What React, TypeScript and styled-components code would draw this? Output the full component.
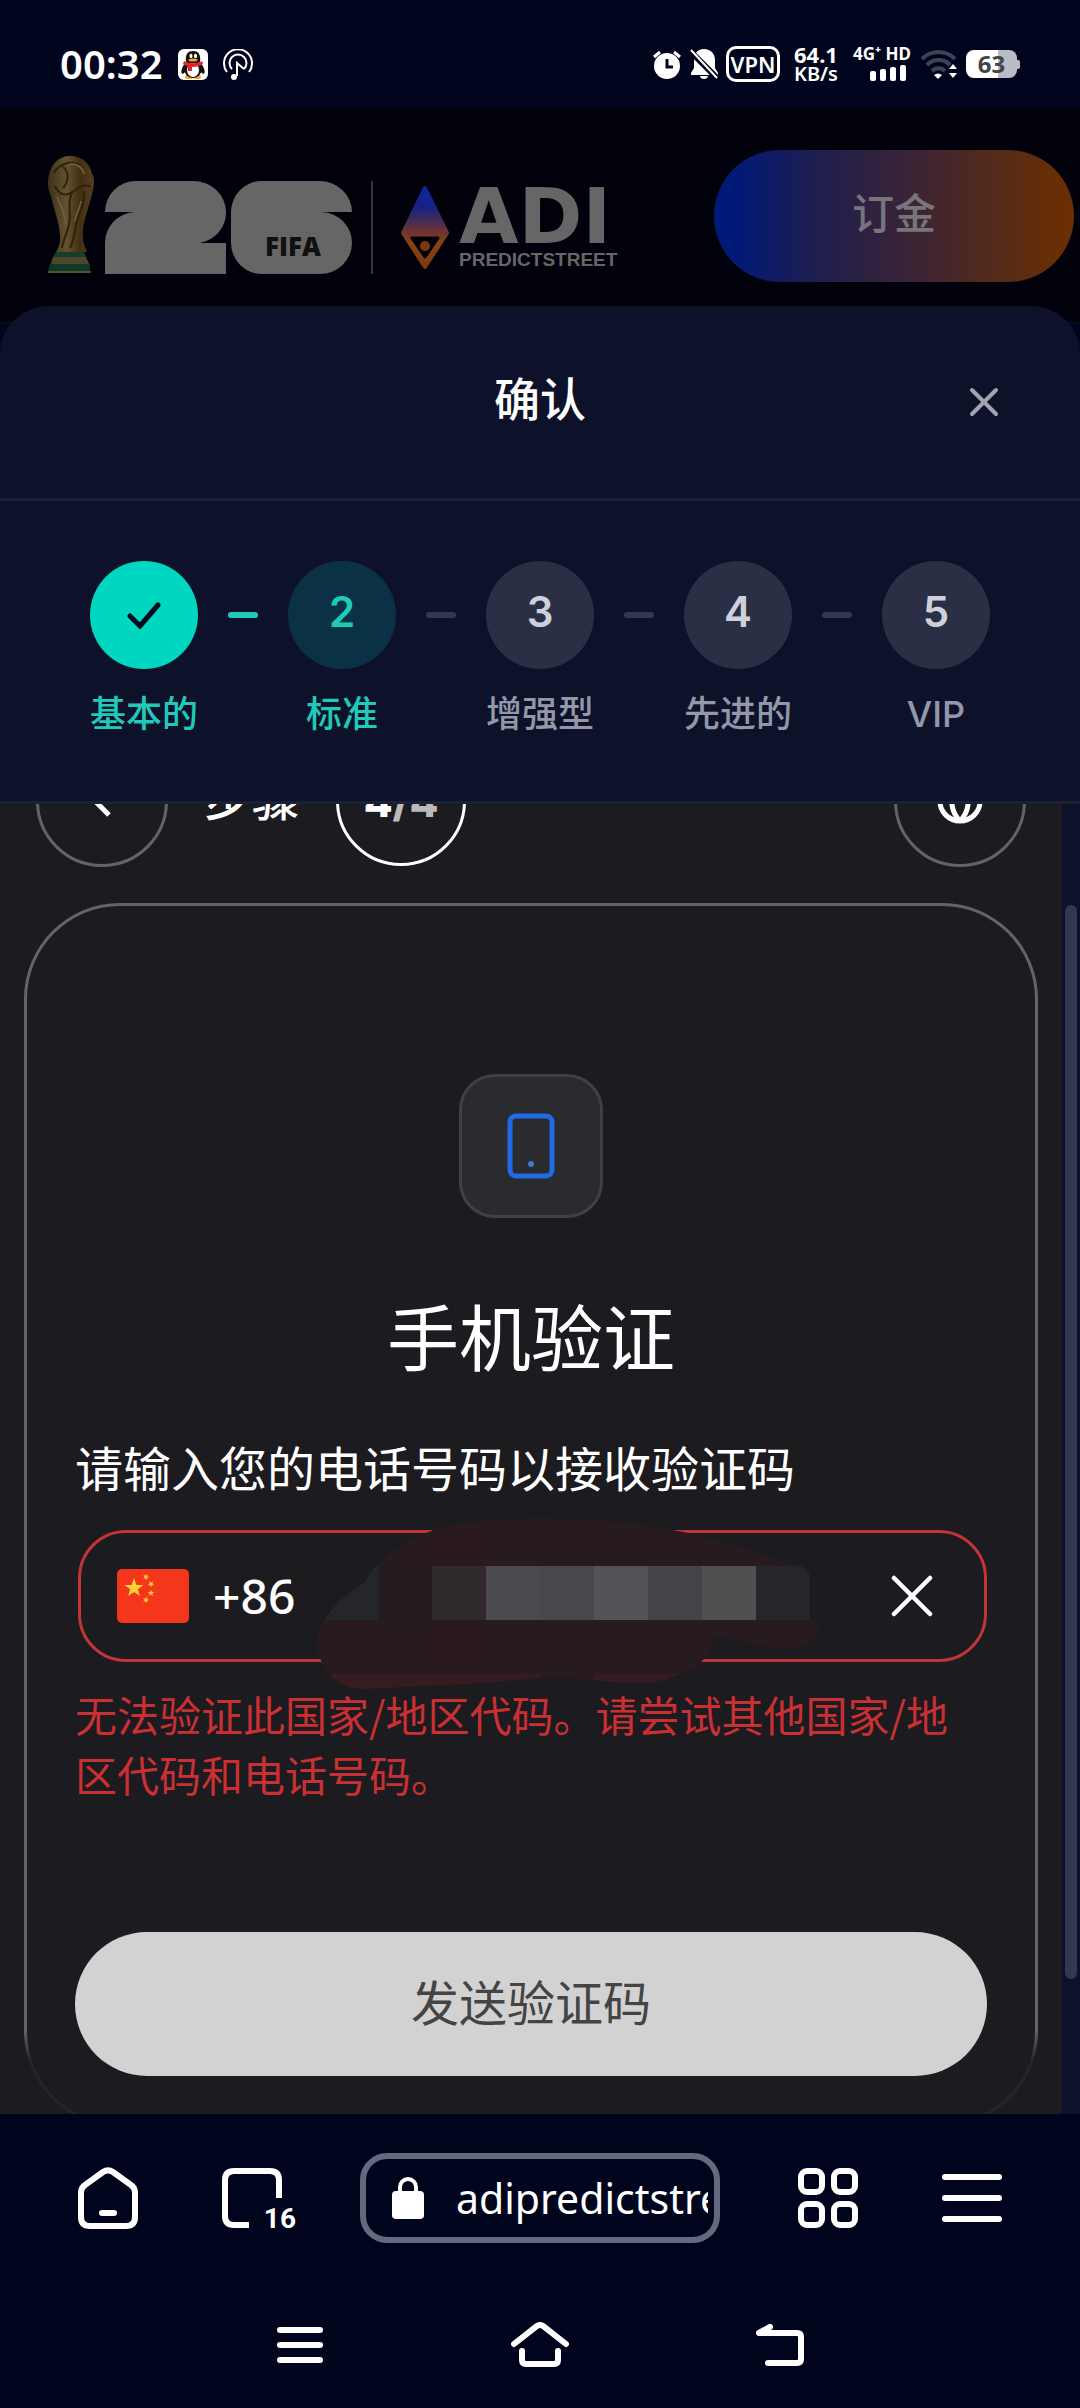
import { useState } from "react";
import styled, { createGlobalStyle, css } from "styled-components";

const GlobalStyle = createGlobalStyle`
  *, *::before, *::after {
    box-sizing: border-box;
  }

  body {
    margin: 0;
    background: #00051d;
    color: #fff;
    font-family: "Noto Sans CJK SC", "Noto Sans", sans-serif;
  }

  button, input {
    font: inherit;
    color: inherit;
    border: none;
    background: none;
    padding: 0;
    margin: 0;
  }

  button {
    cursor: pointer;
  }

  svg {
    display: block;
    flex: none;
  }
`;

const Screen = styled.div`
  display: flex;
  flex-direction: column;
  height: 100vh;
  overflow: hidden;
`;

/* status bar */

const StatusBar = styled.div`
  display: flex;
  justify-content: space-between;
  flex: none;
  height: 108px;
  padding: 20px 60px 0 60px;
  font-family: "Noto Sans", sans-serif;
`;

const StatusGroup = styled.div<{ $gap: number }>`
  display: flex;
  align-items: center;
  gap: ${({ $gap }) => $gap}px;
`;

const Clock = styled.span`
  font-size: 40px;
  font-weight: 600;
  line-height: 48px;
`;

const VpnBadge = styled.span`
  width: 54px;
  height: 36px;
  margin-right: 6px;
  border: 3px solid #fff;
  border-radius: 10px;
  font-size: 22px;
  font-weight: 600;
  line-height: 31px;
  text-align: center;
`;

const NetSpeed = styled.span`
  display: flex;
  flex-direction: column;
  width: 48px;
  margin-right: 2px;
  font-size: 22px;
  font-weight: 700;
  line-height: 20px;

  small {
    font-size: 20px;
    font-weight: 600;
  }
`;

const Signal = styled.span`
  display: flex;
  flex-direction: column;
  align-items: center;
  gap: 4px;
  width: 60px;
  font-size: 17px;
  font-weight: 700;
  line-height: 14px;
  white-space: nowrap;
`;

const Bars = styled.span`
  display: flex;
  align-items: flex-end;
  gap: 4px;
  height: 16px;
  margin-left: 12px;
`;

const Bar = styled.i<{ $height: number }>`
  width: 6px;
  height: ${({ $height }) => $height}px;
  border-radius: 2px;
  background: #fff;
`;

const Battery = styled.span`
  display: flex;
  align-items: center;

  &::after {
    content: "";
    width: 3px;
    height: 9px;
    border-radius: 0 2px 2px 0;
    background: #b9bbc6;
  }
`;

const BatteryBody = styled.span`
  width: 51px;
  height: 28px;
  border-radius: 8px;
  background: linear-gradient(90deg, #fff 63%, #b9bbc6 63%);
  color: #444;
  font-size: 24px;
  font-weight: 700;
  line-height: 28px;
  text-align: center;
`;

/* site header, dimmed behind the sheet */

const SiteHeader = styled.header`
  display: flex;
  justify-content: space-between;
  align-items: flex-start;
  flex: none;
  height: 216px;
  padding: 42px 6px 0 48px;
  border-bottom: 3px solid #080b14;
  background: #00010a;
`;

const Logo = styled.svg`
  margin-top: 5px;
`;

const DepositButton = styled.button`
  width: 360px;
  height: 132px;
  padding-bottom: 12px;
  border-radius: 66px;
  background: linear-gradient(90deg, #001a78 6%, #1c1d52 26%, #35233a 50%, #4d2922 72%, #6a2e02 97%);
  color: #77747c;
  font-size: 42px;
  font-weight: 500;
`;

/* verification sheet */

const Sheet = styled.section`
  position: relative;
  display: flex;
  flex-direction: column;
  flex: 1;
  min-height: 0;
  margin-top: -18px;
  border-radius: 48px 48px 0 0;
  background: #0d122a;
  overflow: hidden;
`;

const SheetHeader = styled.div`
  display: grid;
  grid-template-columns: 1fr auto 1fr;
  align-items: center;
  flex: none;
  height: 195px;
  padding: 0 72px;
  border-bottom: 3px solid #191e37;
`;

const SheetTitle = styled.h1`
  grid-column: 2;
  margin: 0 0 12px;
  font-size: 46px;
  font-weight: 500;
  line-height: 60px;
`;

const IconButton = styled.button`
  justify-self: end;
  display: grid;
  place-items: center;
  width: 48px;
  height: 48px;
`;

const Stepper = styled.ol`
  display: flex;
  justify-content: center;
  flex: none;
  height: 303px;
  margin: 0;
  padding: 60px 0 0;
  border-bottom: 3px solid #1a2035;
  list-style: none;
`;

type StepState = "done" | "current" | "todo";

const Step = styled.li`
  display: flex;
`;

const StepBody = styled.div<{ $state: StepState }>`
  display: flex;
  flex-direction: column;
  align-items: center;
  gap: 18px;
  width: 108px;
  color: ${({ $state }) => ($state === "todo" ? "#9497a8" : "#1fcab8")};
  font-family: Inter, "Noto Sans CJK SC", sans-serif;
  font-size: 36px;
  font-weight: 500;
  line-height: 54px;
  white-space: nowrap;
`;

const StepCircle = styled.span<{ $state: StepState }>`
  display: grid;
  place-items: center;
  width: 108px;
  height: 108px;
  border-radius: 50%;
  font-size: 42px;
  font-weight: 600;
  line-height: 48px;

  ${({ $state }) =>
    $state === "done"
      ? css`
          background: #00d7c0;
        `
      : $state === "current"
        ? css`
            padding-bottom: 6px;
            background: #0b3244;
          `
        : css`
            padding-bottom: 6px;
            background: #2a2f45;
            color: #cfd1da;
          `}
`;

const Dash = styled.i<{ $active: boolean }>`
  width: 30px;
  height: 6px;
  margin: 51px 30px 0;
  border-radius: 3px;
  background: ${({ $active }) => ($active ? "#1fcab8" : "#333852")};
`;

/* embedded verification page */

const Frame = styled.div`
  display: flex;
  flex: 1;
  min-height: 0;
`;

const FramePage = styled.main`
  flex: 1;
  min-width: 0;
  overflow: hidden;
  background: #1c1b1f;
`;

const ScrollTrack = styled.div`
  flex: none;
  width: 18px;
  padding: 0 3px;
`;

const ScrollThumb = styled.div`
  height: 82%;
  margin-top: 101px;
  border-radius: 6px;
  background: #33384f;
`;

/* already scrolled half way under the stepper */
const PageBar = styled.div`
  display: flex;
  align-items: center;
  gap: 36px;
  height: 132px;
  margin: -69px 36px 36px;
`;

const RoundButton = styled.button`
  display: grid;
  place-items: center;
  width: 132px;
  height: 132px;
  border: 3px solid #646466;
  border-radius: 50%;

  &:last-child {
    margin-left: auto;
  }
`;

const StepWord = styled.span`
  padding-bottom: 12px;
  font-size: 48px;
  font-weight: 500;
  line-height: 60px;
`;

const StepCount = styled.span`
  display: grid;
  place-items: center;
  width: 130px;
  height: 130px;
  border: 3px solid #fff;
  border-radius: 50%;
  font-family: Inter, sans-serif;
  font-size: 42px;
  font-weight: 800;

  em {
    color: #bcbabb;
    font-style: normal;
  }
`;

/* the outline fades out where the bottom corners begin */
const Card = styled.form`
  display: flex;
  flex-direction: column;
  margin: 0 24px;
  padding: 168px 48px 48px;
  border: 3px solid transparent;
  border-radius: 96px;
  background:
    linear-gradient(#1c1b1f, #1c1b1f) padding-box,
    linear-gradient(#646466 calc(100% - 96px), #252528 calc(100% - 66px)) border-box;
`;

const PhoneTile = styled.div`
  display: grid;
  place-items: center;
  align-self: center;
  width: 144px;
  height: 144px;
  border: 3px solid #404145;
  border-radius: 36px;
  background: #2a2b2f;
`;

const CardTitle = styled.h2`
  margin: 68px 0 54px;
  font-size: 72px;
  font-weight: 400;
  line-height: 96px;
  text-align: center;
`;

const FieldLabel = styled.label`
  font-size: 48px;
  line-height: 60px;
`;

const PhoneField = styled.div`
  position: relative;
  display: flex;
  align-items: center;
  height: 132px;
  margin: 34px 0 22px 3px;
  padding: 0 48px 0 36px;
  border: 3px solid #c23438;
  border-radius: 48px;
`;

const CountryButton = styled.button`
  display: flex;
  align-items: center;
  gap: 24px;
  font-family: "Noto Sans", sans-serif;
  font-size: 48px;
  font-weight: 500;
  line-height: 60px;
`;

const PhoneInput = styled.input`
  flex: 1;
  min-width: 0;
  height: 60px;
  margin-left: 24px;
  font-size: 48px;
  outline: none;
`;

const Smudge = styled.svg`
  position: absolute;
  left: 234px;
  top: -17px;
  pointer-events: none;
`;

const ErrorText = styled.p`
  margin: 0 0 128px;
  color: #c83033;
  font-size: 42px;
  line-height: 60px;
`;

const SendButton = styled.button`
  height: 144px;
  padding-bottom: 8px;
  border-radius: 72px;
  background: #d2d2d2;
  color: #444;
  font-size: 48px;
  line-height: 60px;
`;

/* browser toolbar and system navigation */

const BrowserBar = styled.nav`
  display: grid;
  grid-template-columns: 144px 144px minmax(0, 1fr) 144px 144px;
  align-items: center;
  flex: none;
  height: 168px;
  padding: 0 36px;
`;

const BarButton = styled.button`
  display: grid;
  place-items: center;
  height: 96px;
`;

const TabsIcon = styled.span`
  position: relative;
`;

const TabCount = styled.span`
  position: absolute;
  right: -14px;
  bottom: -4px;
  font-family: Roboto, sans-serif;
  font-size: 28px;
  font-weight: 700;
  line-height: 26px;
`;

const AddressBox = styled.label`
  display: flex;
  align-items: center;
  gap: 32px;
  height: 90px;
  margin: 0 36px;
  padding: 0 6px 0 26px;
  border: 6px solid #646a7e;
  border-radius: 27px;
`;

const AddressInput = styled.input`
  flex: 1;
  min-width: 0;
  height: 60px;
  font-family: "Noto Sans", sans-serif;
  font-size: 41px;
  outline: none;
`;

const SystemNav = styled.nav`
  display: flex;
  justify-content: center;
  flex: none;
  height: 126px;
`;

const SystemButton = styled.button`
  display: grid;
  place-items: center;
  width: 240px;
`;

const steps: { label: string; state: StepState }[] = [
  { label: "基本的", state: "done" },
  { label: "标准", state: "current" },
  { label: "增强型", state: "todo" },
  { label: "先进的", state: "todo" },
  { label: "VIP", state: "todo" },
];

const smudgeCells = ["#231b20", "#30292e", "#4a4a4f", "#47474d", "#525258", "#434348", "#505051", "#25252b"];

const star = "M0-10 2.4-3.1 9.5-3.1 3.8 1.2 5.9 8.1 0 4-5.9 8.1-3.8 1.2-9.5-3.1-2.4-3.1z";

function QQIcon() {
  return (
    <svg width="30" height="31" viewBox="0 0 30 31">
      <rect width="30" height="31" rx="6" fill="#fff" />
      <ellipse cx="6" cy="20" rx="2" ry="5" fill="#111" transform="rotate(20 6 20)" />
      <ellipse cx="24" cy="20" rx="2" ry="5" fill="#111" transform="rotate(-20 24 20)" />
      <ellipse cx="11" cy="28" rx="4" ry="2" fill="#f5a623" />
      <ellipse cx="19" cy="28" rx="4" ry="2" fill="#f5a623" />
      <ellipse cx="15" cy="20" rx="9" ry="9" fill="#111" />
      <ellipse cx="15" cy="21" rx="6" ry="7" fill="#fff" />
      <path d="M8 13C7 5 10 2 15 2s8 3 7 11z" fill="#111" />
      <ellipse cx="13" cy="7" rx="1.5" ry="2.3" fill="#fff" />
      <ellipse cx="17.5" cy="7" rx="1.5" ry="2.3" fill="#fff" />
      <ellipse cx="15" cy="11" rx="4.5" ry="1.5" fill="#f5a623" />
      <path d="M6 12c5 3 13 3 18 0l1 3c-3 2-7 3-11 3v4h-4v-5c-2 0-4-1-5-2z" fill="#e2232e" />
    </svg>
  );
}

function StatusIcons() {
  return (
    <>
      <svg width="30" height="30" viewBox="0 0 30 30">
        <path d="M2 8 8 3M28 8l-6-5" stroke="#fff" strokeWidth="3" />
        <circle cx="15" cy="17" r="13" fill="#fff" />
        <path d="M15 10v8h6" fill="none" stroke="#00051d" strokeWidth="3" />
      </svg>
      <svg width="28" height="30" viewBox="0 0 28 30">
        <path d="M14 0c7 0 11 5 11 11v8l3 5v2H1v-2l3-5v-8C4 5 7 0 14 0zM10 27h8c0 2-2 3-4 3s-4-1-4-3z" fill="#fff" />
        <path d="M-1 1 28 30" stroke="#00051d" strokeWidth="6" />
        <path d="M1 1 27 29" stroke="#fff" strokeWidth="2" />
      </svg>
    </>
  );
}

function SiteLogo() {
  return (
    <Logo width="576" height="120" viewBox="0 0 576 120" role="img" aria-label="FIFA 26 | ADI Predictstreet">
      <defs>
        <linearGradient id="gold" x1="0" x2="1">
          <stop offset="0" stopColor="#3d3019" />
          <stop offset=".4" stopColor="#63522f" />
          <stop offset=".7" stopColor="#432f12" />
          <stop offset="1" stopColor="#544020" />
        </linearGradient>
        <linearGradient id="gem" x1="0" y1="0" x2="0" y2="1">
          <stop offset="0" stopColor="#10249a" />
          <stop offset=".25" stopColor="#172283" />
          <stop offset=".55" stopColor="#6b3431" />
          <stop offset=".7" stopColor="#8a420f" />
          <stop offset="1" stopColor="#7a3a0c" />
        </linearGradient>
      </defs>
      <path
        d="M22 1C35 1 42 9 44 19c3 3 2 10 1 16-2 9-4 14-6 22-3 10-5 18-4 25 0 7 3 11 4 15H8c2-4 5-8 4-17C11 66 5 52 3 41 0 36-1 26 1 20 3 9 11 1 22 1z"
        fill="url(#gold)"
      />
      <path
        d="M6 18c5-9 18-14 27-7M7 31c4 9 11 11 19 5 6-5 12-7 17-4M24 37c-6 14 1 22-4 36-2 8-5 13-6 20M36 36c2 12-6 22-8 34-2 10-2 15-6 23M15 12c6 4 6 14 0 21"
        fill="none"
        stroke="#32210b"
        strokeWidth="2"
      />
      <path d="M20 10c8-3 14 2 16 9M9 42c4 8 8 18 9 28M33 46c-1 8-5 12-6 20" fill="none" stroke="#75623d" strokeWidth="1.5" />
      <path d="M8 97h28l2 5H5z" fill="#12402c" />
      <path d="M5 102h33l4 9H2z" fill="#4f472b" />
      <path d="M2 109h40v8H0z" fill="#0c3a26" />
      <path d="M0 117h43" stroke="#5b4c2c" strokeWidth="2" />
      <g fill="#666">
        <path d="M57 57a31 31 0 0 1 31-31h57a33 31 0 0 1 33 31 33 31 0 0 1-26 31h26v31H57V88a31 31 0 0 1 29-31z" />
        <path d="M214 26h57a33 31 0 0 1 33 31h-30a31 31 0 0 1 30 31 32 31 0 0 1-32 31h-58a31 31 0 0 1-31-31V57a31 31 0 0 1 31-31z" />
        <path d="M324 26v93" stroke="#666" strokeWidth="1" />
      </g>
      <text x="217" y="101" fill="#101010" fontFamily="Open Sans, sans-serif" fontSize="26" fontWeight="800">
        FIFA
      </text>
      <path
        d="M377 33 355 78 377 112 399 78z"
        fill="url(#gem)"
        stroke="url(#gem)"
        strokeWidth="4"
        strokeLinejoin="round"
      />
      <path d="M364 83h26l-13 19z" fill="#00010a" stroke="#00010a" strokeWidth="3" strokeLinejoin="round" />
      <circle cx="377" cy="91" r="5" fill="#7a3a0c" />
      <text x="411" y="88" fill="#666" fontFamily="DejaVu Sans, sans-serif" fontSize="77" fontWeight="700">
        ADI
      </text>
      <text x="411" y="111" fill="#666" fontFamily="Liberation Sans, sans-serif" fontSize="19" fontWeight="700">
        PREDICTSTREET
      </text>
    </Logo>
  );
}

function PhoneSmudge() {
  return (
    <Smudge width="510" height="176" viewBox="315 1516 510 176" aria-hidden="true">
      <defs>
        <clipPath id="smudge">
          <path d="M317 1642C317 1634 320 1626 324 1621 332 1608 342 1596 365 1582 370 1572 374 1567 382 1561 398 1547 416 1536 434 1530 470 1520 505 1518 540 1518 590 1518 640 1524 673 1530 715 1538 752 1551 781 1561 800 1564 810 1568 810 1578V1621L820 1624C819 1634 814 1641 809 1643 799 1650 790 1650 781 1649 757 1646 732 1640 714 1635 714 1648 709 1655 702 1661 695 1670 688 1672 678 1675 664 1681 652 1683 636 1683 610 1683 570 1676 540 1678 520 1679 500 1682 482 1683L365 1689C350 1689 341 1684 334 1679 325 1670 317 1658 317 1642z" />
        </clipPath>
      </defs>
      <g clipPath="url(#smudge)">
        <path d="M315 1516h510v176H315z" fill="#271b20" />
        <path d="M432 1516h54v50h-54zM432 1620h54v54h-54z" fill="#2a1a1f" />
        <path d="M315 1566h63v54h-63z" fill="#25262b" />
        <path d="M315 1674h225v18H315zM594 1674h108v18H594z" fill="#361b20" />
        {smudgeCells.map((fill, i) => (
          <rect key={i} x={378 + i * 54} y="1566" width="54" height="54" fill={fill} />
        ))}
      </g>
    </Smudge>
  );
}

export default function App() {
  const [phone, setPhone] = useState("");

  return (
    <Screen>
      <GlobalStyle />
      <StatusBar>
        <StatusGroup $gap={15}>
          <Clock>00:32</Clock>
          <QQIcon />
          <svg width="30" height="31" viewBox="0 0 30 31" fill="none" stroke="#fff" strokeWidth="2">
            <path d="M4 23a14 14 0 1 1 22 0" />
            <path d="M9 20a8.500 8.500 0 1 1 12 0" />
            <path d="M14 27V14l7 6" />
            <circle cx="11" cy="28" r="3" fill="#fff" stroke="none" />
          </svg>
        </StatusGroup>
        <StatusGroup $gap={8}>
          <StatusIcons />
          <VpnBadge>VPN</VpnBadge>
          <NetSpeed>
            64.1
            <small>KB/s</small>
          </NetSpeed>
          <Signal>
            4G⁺ HD
            <Bars>
              {[10, 12, 14, 16].map((height) => (
                <Bar key={height} $height={height} />
              ))}
            </Bars>
          </Signal>
          <svg width="38" height="30" viewBox="0 0 38 30" fill="none">
            <path d="M2 10a23 23 0 0 1 33 0M7 16a16 16 0 0 1 23 0M12 22a9 9 0 0 1 13 0" stroke="#3e4256" strokeWidth="4" />
            <path d="M14 26q4-3 8 0l-4 4z" fill="#fff" />
            <path d="m33 15 4 5h-8zM33 29l4-5h-8z" fill="#fff" />
          </svg>
          <Battery>
            <BatteryBody>63</BatteryBody>
          </Battery>
        </StatusGroup>
      </StatusBar>

      <SiteHeader>
        <SiteLogo />
        <DepositButton>订金</DepositButton>
      </SiteHeader>

      <Sheet>
        <SheetHeader>
          <SheetTitle>确认</SheetTitle>
          <IconButton aria-label="关闭">
            <svg width="30" height="30" viewBox="0 0 30 30" stroke="#a2a4b1" strokeWidth="4" strokeLinecap="round">
              <path d="m3 3 24 24M27 3 3 27" />
            </svg>
          </IconButton>
        </SheetHeader>

        <Stepper>
          {steps.map(({ label, state }, i) => (
            <Step key={label}>
              {i > 0 && <Dash $active={i === 1} />}
              <StepBody $state={state}>
                <StepCircle $state={state}>
                  {state === "done" ? (
                    <svg width="36" height="28" viewBox="0 0 36 28" fill="none" stroke="#050a20" strokeWidth="5" strokeLinecap="round">
                      <path d="m4 15 10 10L32 4" />
                    </svg>
                  ) : (
                    i + 1
                  )}
                </StepCircle>
                {label}
              </StepBody>
            </Step>
          ))}
        </Stepper>

        <Frame>
          <FramePage>
            <PageBar>
              <RoundButton aria-label="返回">
                <svg width="48" height="48" viewBox="0 0 48 48" fill="none" stroke="#fff" strokeWidth="5">
                  <path d="M31 10 17 24l14 14" />
                </svg>
              </RoundButton>
              <StepWord>步骤</StepWord>
              <StepCount>
                <span>
                  4<em>/4</em>
                </span>
              </StepCount>
              <RoundButton aria-label="语言">
                <svg width="46" height="46" viewBox="0 0 46 46" fill="none" stroke="#fff" strokeWidth="5">
                  <circle cx="23" cy="23" r="20" />
                  <path d="M3 23h40M23 3c-11 11-11 29 0 40M23 3c11 11 11 29 0 40" />
                </svg>
              </RoundButton>
            </PageBar>

            <Card onSubmit={(e) => e.preventDefault()}>
              <PhoneTile>
                <svg width="48" height="66" viewBox="0 0 48 66">
                  <rect x="3" y="3" width="42" height="60" rx="6" fill="none" stroke="#1f6ae6" strokeWidth="5" />
                  <circle cx="24" cy="51" r="3" fill="#3f78c9" />
                </svg>
              </PhoneTile>
              <CardTitle>手机验证</CardTitle>
              <FieldLabel htmlFor="phone">请输入您的电话号码以接收验证码</FieldLabel>
              <PhoneField>
                <CountryButton type="button">
                  <svg width="72" height="54" viewBox="0 0 72 54">
                    <rect width="72" height="54" rx="5" fill="#f4361c" />
                    <g fill="#ffd234">
                      <path d={star} transform="translate(17 19)" />
                      <path d={star} transform="translate(29 8) rotate(20) scale(.35)" />
                      <path d={star} transform="translate(34 15) rotate(40) scale(.35)" />
                      <path d={star} transform="translate(34 24) scale(.35)" />
                      <path d={star} transform="translate(29 31) rotate(20) scale(.35)" />
                    </g>
                  </svg>
                  +86
                </CountryButton>
                <PhoneInput id="phone" type="tel" value={phone} onChange={(e) => setPhone(e.target.value)} />
                <IconButton type="button" aria-label="清除" onClick={() => setPhone("")}>
                  <svg width="42" height="42" viewBox="0 0 42 42" stroke="#fff" strokeWidth="4.5" strokeLinecap="round">
                    <path d="m3 3 36 36M39 3 3 39" />
                  </svg>
                </IconButton>
                <PhoneSmudge />
              </PhoneField>
              <ErrorText>无法验证此国家/地区代码。请尝试其他国家/地区代码和电话号码。</ErrorText>
              <SendButton>发送验证码</SendButton>
            </Card>
          </FramePage>
          <ScrollTrack>
            <ScrollThumb />
          </ScrollTrack>
        </Frame>
      </Sheet>

      <BrowserBar>
        <BarButton aria-label="主页">
          <svg width="60" height="62" viewBox="0 0 60 62" fill="none" stroke="#fff" strokeWidth="6" strokeLinecap="round">
            <path d="M3 26c0-4 1-6 4-8L25 5c3-2 7-2 10 0l18 13c3 2 4 4 4 8v24c0 6-3 9-9 9H12c-6 0-9-3-9-9z" />
            <path d="M24 46h12" />
          </svg>
        </BarButton>
        <BarButton aria-label="标签页">
          <TabsIcon>
            <svg width="60" height="60" viewBox="0 0 60 60" fill="none" stroke="#fff" strokeWidth="6">
              <path d="M27 57H12c-6 0-9-3-9-9V12c0-6 3-9 9-9h36c6 0 9 3 9 9v18" />
            </svg>
            <TabCount>16</TabCount>
          </TabsIcon>
        </BarButton>
        <AddressBox>
          <svg width="32" height="42" viewBox="0 0 32 42">
            <path d="M8 16v-6a8 8 0 0 1 16 0v6" fill="none" stroke="#fff" strokeWidth="4" />
            <rect y="14" width="32" height="28" rx="4" fill="#fff" />
          </svg>
          <AddressInput aria-label="网址" readOnly value="adipredictstreet" />
        </AddressBox>
        <BarButton aria-label="应用">
          <svg width="60" height="60" viewBox="0 0 60 60" fill="none" stroke="#fff" strokeWidth="6">
            <rect x="3" y="3" width="21" height="21" rx="6" />
            <rect x="36" y="3" width="21" height="21" rx="6" />
            <rect x="3" y="36" width="21" height="21" rx="6" />
            <rect x="36" y="36" width="21" height="21" rx="6" />
          </svg>
        </BarButton>
        <BarButton aria-label="菜单">
          <svg width="60" height="48" viewBox="0 0 60 48" stroke="#fff" strokeWidth="6" strokeLinecap="round">
            <path d="M3 3h54M3 24h54M3 45h54" />
          </svg>
        </BarButton>
      </BrowserBar>

      <SystemNav>
        <SystemButton aria-label="最近任务">
          <svg width="46" height="36" viewBox="0 0 46 36" stroke="#fff" strokeWidth="6" strokeLinecap="round">
            <path d="M3 3h40M3 18h40M3 33h40" />
          </svg>
        </SystemButton>
        <SystemButton aria-label="桌面">
          <svg width="58" height="46" viewBox="0 0 58 46" fill="none" stroke="#fff" strokeWidth="6" strokeLinecap="round">
            <path d="M3 22 26 4q3-2 6 0l23 18" />
            <path d="M11 29v9q0 4 4 4h28q4 0 4-4v-9" />
          </svg>
        </SystemButton>
        <SystemButton aria-label="返回上一页">
          <svg width="48" height="44" viewBox="0 0 48 44" fill="none" stroke="#fff" strokeWidth="6" strokeLinecap="round" strokeLinejoin="round">
            <path d="M14 4 3 10h38q4 0 4 4v22q0 4-4 4H12" />
          </svg>
        </SystemButton>
      </SystemNav>
    </Screen>
  );
}
